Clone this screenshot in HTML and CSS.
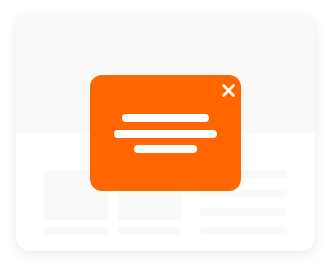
FILE: index.html
```html
<!DOCTYPE html>
<html>
<head>
<meta charset="utf-8">
<link rel="stylesheet" href="styles.css">
</head>
<body>
<div class="stage">
  <div class="card">
    <div class="card-top"></div>
    <div class="card-bottom">
      <div class="col col-small">
        <div class="ph-box"></div>
        <div class="ph-bar"></div>
      </div>
      <div class="col col-small">
        <div class="ph-box"></div>
        <div class="ph-bar"></div>
      </div>
      <div class="col col-lines">
        <div class="ph-bar"></div>
        <div class="ph-bar"></div>
        <div class="ph-bar"></div>
        <div class="ph-bar"></div>
      </div>
    </div>
    <div class="popup">
      <svg class="close" width="13" height="13" viewBox="0 0 13 13">
        <path d="M1.5 1.5 L11.5 11.5 M11.5 1.5 L1.5 11.5" stroke="#fff" stroke-width="2.6" stroke-linecap="round" fill="none"/>
      </svg>
      <div class="lines">
        <div class="line l1"></div>
        <div class="line l2"></div>
        <div class="line l3"></div>
      </div>
    </div>
  </div>
</div>
</body>
</html>
```
FILE: styles.css
```css
html, body {
  margin: 0;
  padding: 0;
  background: #ffffff;
}
.stage {
  width: 332px;
  height: 273px;
  padding: 14px 0 0 16px;
  box-sizing: border-box;
}
.card {
  position: relative;
  width: 299px;
  height: 237px;
  border-radius: 14px;
  background: #ffffff;
  box-shadow: 0 4px 14px rgba(0, 0, 0, 0.08), 0 0 3px rgba(0, 0, 0, 0.03);
  overflow: hidden;
  display: flex;
  flex-direction: column;
}
.card-top {
  height: 119px;
  background: #f9f9f9;
  flex: none;
}
.card-bottom {
  display: flex;
  padding: 37px 0 0 28px;
  gap: 10px;
}
.col {
  display: flex;
  flex-direction: column;
}
.col-small {
  width: 64px;
  gap: 7px;
}
.col-lines {
  width: 87px;
  margin-left: 8px;
  gap: 11px;
}
.ph-box {
  height: 50px;
  background: #f9f9f9;
}
.ph-bar {
  height: 8px;
  border-radius: 4px;
  background: #f9f9f9;
}
.popup {
  position: absolute;
  left: 74px;
  top: 61px;
  width: 151px;
  height: 116px;
  border-radius: 12px;
  background: #ff6600;
}
.close {
  position: absolute;
  left: 132px;
  top: 9px;
  display: block;
}
.lines {
  display: flex;
  flex-direction: column;
  align-items: center;
  gap: 7.5px;
  padding-top: 39px;
}
.line {
  height: 8px;
  border-radius: 4px;
  background: #ffffff;
}
.l1 { width: 87px; }
.l2 { width: 103px; }
.l3 { width: 63px; }
```
